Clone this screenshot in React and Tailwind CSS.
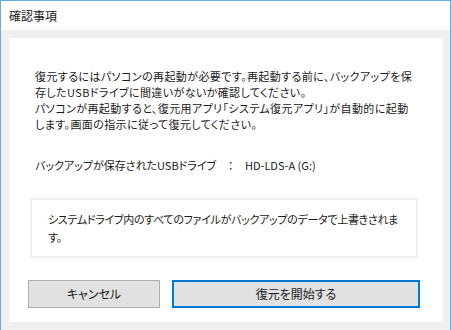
export default function App() {
  return (
    <div className="w-[451px] h-[330px] flex flex-col border-l border-t border-r border-[#62adf0] font-['Noto_Sans_CJK_JP',sans-serif] text-[#1a1a1a] [font-feature-settings:'palt'] overflow-hidden">
      {/* タイトルバー */}
      <div className="h-[29px] bg-white flex items-center pl-[8px] text-[12px]">確認事項</div>

      <div className="flex-1 bg-[#f0f0f0] pt-[8px] pl-[8px] pr-[7px] pb-[8px]">
        <div className="h-[284px] bg-white flex flex-col text-[11px]">
          <p className="pt-[30px] pl-[26px] leading-[16px] whitespace-nowrap tracking-[0.4px]">
            復元するにはパソコンの再起動が必要です。再起動する前に、バックアップを保<br />
            存したUSBドライブに間違いがないか確認してください。<br />
            パソコンが再起動すると、復元用アプリ「システム復元アプリ」が自動的に起動<br />
            します。画面の指示に従って復元してください。
          </p>

          <div className="mt-[25px] pl-[26px] flex leading-[16px] whitespace-nowrap">
            <span className="w-[193px] shrink-0">バックアップが保存されたUSBドライブ</span>
            <span className="w-[17px] shrink-0">：</span>
            <span>HD-LDS-A (G:)</span>
          </div>

          <div className="mt-[25px] ml-[21px] mr-[25px] h-[60px] border-2 border-[#f0f0f0] pt-[10px] pl-[16px] leading-[18px] whitespace-nowrap tracking-[-0.3px]">
            システムドライブ内のすべてのファイルがバックアップのデータで上書きされま<br />
            す。
          </div>

          <div className="mt-[22px] pl-[19px] flex gap-[12px]">
            <button className="w-[132px] h-[28px] bg-[#e1e1e1] border border-[#adadad] text-[12px] flex items-center justify-center">
              キャンセル
            </button>
            <button className="w-[248px] h-[28px] bg-[#e1e1e1] border-2 border-[#0078d7] text-[12px] flex items-center justify-center">
              復元を開始する
            </button>
          </div>
        </div>
      </div>
    </div>
  )
}
